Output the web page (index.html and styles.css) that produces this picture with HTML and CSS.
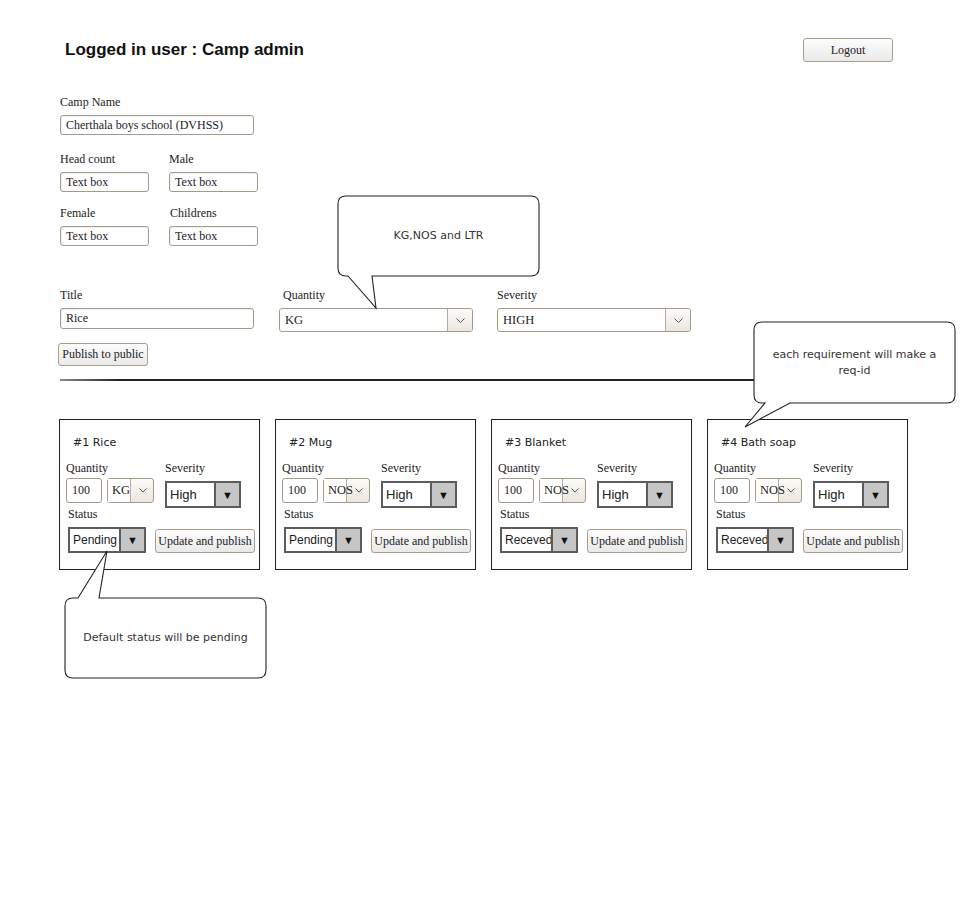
FILE: index.html
```html
<!DOCTYPE html>
<html lang="en">
<head>
    <meta charset="UTF-8">
    <meta name="viewport" content="width=device-width, initial-scale=1.0">
    <title>Camp admin</title>
    <link rel="stylesheet" href="styles.css">
</head>
<body>
    <div class="page">
        <div class="header">
            <h1>Logged in user : Camp admin</h1>
            <button class="btn logout">Logout</button>
        </div>

        <div class="form">
            <div class="field wide">
                <label>Camp Name</label>
                <div class="tb">Cherthala boys school (DVHSS)</div>
            </div>
            <div class="row row-two">
                <div class="field small">
                    <label>Head count</label>
                    <div class="tb">Text box</div>
                </div>
                <div class="field small">
                    <label>Male</label>
                    <div class="tb">Text box</div>
                </div>
            </div>
            <div class="row row-three">
                <div class="field small">
                    <label>Female</label>
                    <div class="tb">Text box</div>
                </div>
                <div class="field small">
                    <label class="nudge">Childrens</label>
                    <div class="tb">Text box</div>
                </div>
            </div>
            <div class="row row-title">
                <div class="field wide">
                    <label>Title</label>
                    <div class="tb tb-title">Rice</div>
                </div>
                <div class="field wide">
                    <label class="indent">Quantity</label>
                    <div class="select">
                        <span class="select-val">KG</span>
                        <span class="select-btn"><svg width="9" height="5" viewBox="0 0 9 5"><polyline points="0.5,0.5 4.5,4.5 8.5,0.5" fill="none" stroke="#555" stroke-width="1"/></svg></span>
                    </div>
                </div>
                <div class="field wide">
                    <label>Severity</label>
                    <div class="select">
                        <span class="select-val">HIGH</span>
                        <span class="select-btn"><svg width="9" height="5" viewBox="0 0 9 5"><polyline points="0.5,0.5 4.5,4.5 8.5,0.5" fill="none" stroke="#555" stroke-width="1"/></svg></span>
                    </div>
                </div>
            </div>
            <button class="btn publish">Publish to public</button>
        </div>

        <div class="divider"></div>

        <div class="cards">
            <div class="card">
                <div class="card-title">#1 Rice</div>
                <div class="card-row">
                    <div class="cell cell-qty">
                        <div class="clabel">Quantity</div>
                        <div class="qty">
                            <div class="num">100</div>
                            <div class="unit"><span class="unit-val">KG</span><span class="unit-btn"><svg width="8" height="5" viewBox="0 0 8 5"><polyline points="0.5,0.5 4,4.2 7.5,0.5" fill="none" stroke="#555" stroke-width="1"/></svg></span></div>
                        </div>
                    </div>
                    <div class="cell">
                        <div class="clabel">Severity</div>
                        <div class="dd dd-sev"><span class="dd-val">High</span><span class="dd-arr">&#9660;</span></div>
                    </div>
                </div>
                <div class="card-row status-row">
                    <div class="cell cell-status">
                        <div class="clabel">Status</div>
                        <div class="dd dd-status"><span class="dd-val">Pending</span><span class="dd-arr">&#9660;</span></div>
                    </div>
                    <button class="btn update">Update and publish</button>
                </div>
            </div>

            <div class="card">
                <div class="card-title">#2 Mug</div>
                <div class="card-row">
                    <div class="cell cell-qty">
                        <div class="clabel">Quantity</div>
                        <div class="qty">
                            <div class="num">100</div>
                            <div class="unit"><span class="unit-val">NOS</span><span class="unit-btn"><svg width="8" height="5" viewBox="0 0 8 5"><polyline points="0.5,0.5 4,4.2 7.5,0.5" fill="none" stroke="#555" stroke-width="1"/></svg></span></div>
                        </div>
                    </div>
                    <div class="cell">
                        <div class="clabel">Severity</div>
                        <div class="dd dd-sev"><span class="dd-val">High</span><span class="dd-arr">&#9660;</span></div>
                    </div>
                </div>
                <div class="card-row status-row">
                    <div class="cell cell-status">
                        <div class="clabel">Status</div>
                        <div class="dd dd-status"><span class="dd-val">Pending</span><span class="dd-arr">&#9660;</span></div>
                    </div>
                    <button class="btn update">Update and publish</button>
                </div>
            </div>

            <div class="card">
                <div class="card-title">#3 Blanket</div>
                <div class="card-row">
                    <div class="cell cell-qty">
                        <div class="clabel">Quantity</div>
                        <div class="qty">
                            <div class="num">100</div>
                            <div class="unit"><span class="unit-val">NOS</span><span class="unit-btn"><svg width="8" height="5" viewBox="0 0 8 5"><polyline points="0.5,0.5 4,4.2 7.5,0.5" fill="none" stroke="#555" stroke-width="1"/></svg></span></div>
                        </div>
                    </div>
                    <div class="cell">
                        <div class="clabel">Severity</div>
                        <div class="dd dd-sev"><span class="dd-val">High</span><span class="dd-arr">&#9660;</span></div>
                    </div>
                </div>
                <div class="card-row status-row">
                    <div class="cell cell-status">
                        <div class="clabel">Status</div>
                        <div class="dd dd-status"><span class="dd-val">Receved</span><span class="dd-arr">&#9660;</span></div>
                    </div>
                    <button class="btn update">Update and publish</button>
                </div>
            </div>

            <div class="card">
                <div class="card-title">#4 Bath soap</div>
                <div class="card-row">
                    <div class="cell cell-qty">
                        <div class="clabel">Quantity</div>
                        <div class="qty">
                            <div class="num">100</div>
                            <div class="unit"><span class="unit-val">NOS</span><span class="unit-btn"><svg width="8" height="5" viewBox="0 0 8 5"><polyline points="0.5,0.5 4,4.2 7.5,0.5" fill="none" stroke="#555" stroke-width="1"/></svg></span></div>
                        </div>
                    </div>
                    <div class="cell">
                        <div class="clabel">Severity</div>
                        <div class="dd dd-sev"><span class="dd-val">High</span><span class="dd-arr">&#9660;</span></div>
                    </div>
                </div>
                <div class="card-row status-row">
                    <div class="cell cell-status">
                        <div class="clabel">Status</div>
                        <div class="dd dd-status"><span class="dd-val">Receved</span><span class="dd-arr">&#9660;</span></div>
                    </div>
                    <button class="btn update">Update and publish</button>
                </div>
            </div>
        </div>

        <!-- annotation bubbles -->
        <div class="callout callout-units">
            <svg class="bubble" width="204" height="116" viewBox="0 0 204 116">
                <path d="M9 1 H194 Q202 1 202 9 V73 Q202 81 194 81 H35 L39 113 L11 81 H9 Q1 81 1 73 V9 Q1 1 9 1 Z" fill="#fff" stroke="#222" stroke-width="1.1"/>
            </svg>
            <div class="callout-text">KG,NOS and LTR</div>
        </div>

        <div class="callout callout-reqid">
            <svg class="bubble" width="214" height="108" viewBox="0 0 214 108">
                <path d="M19 1 H204 Q212 1 212 9 V74 Q212 82 204 82 H47 L2 106 L22 82 H19 Q11 82 11 74 V9 Q11 1 19 1 Z" fill="#fff" stroke="#222" stroke-width="1.1"/>
            </svg>
            <div class="callout-text">each requirement will make a<br>req-id</div>
        </div>

        <div class="callout callout-status">
            <svg class="bubble" width="204" height="131" viewBox="0 0 204 131">
                <path d="M9 49 H14 L43 2 L35 49 H194 Q202 49 202 57 V121 Q202 129 194 129 H9 Q1 129 1 121 V57 Q1 49 9 49 Z" fill="#fff" stroke="#222" stroke-width="1.1"/>
            </svg>
            <div class="callout-text">Default status will be pending</div>
        </div>
    </div>
</body>
</html>
```

FILE: styles.css
```css
body {
    margin: 0;
    background: #fff;
    color: #222;
    font-family: 'Liberation Serif', serif;
    font-size: 12px;
}
.page {
    position: relative;
    width: 960px;
    min-height: 900px;
    box-sizing: border-box;
    padding: 38px 0 0 60px;
}
.header {
    display: flex;
    justify-content: space-between;
    align-items: center;
    width: 833px;
    height: 24px;
}
h1 {
    margin: 0 0 0 5px;
    font-family: 'Liberation Sans', sans-serif;
    font-size: 17px;
    font-weight: 700;
    color: #111;
}
.btn {
    font-family: 'Liberation Serif', serif;
    font-size: 12px;
    color: #222;
    background: linear-gradient(#fdfdfd, #e9e9e9);
    border: 1px solid #a89e8c;
    border-radius: 3px;
    padding: 0;
    cursor: pointer;
}
.logout {
    width: 90px;
    height: 24px;
}

/* form */
.form {
    margin-top: 33px;
}
.field label {
    display: block;
    line-height: 14px;
    margin-bottom: 6px;
}
.field label.indent {
    padding-left: 4px;
}
.field label.nudge {
    padding-left: 1px;
}
.wide {
    width: 194px;
}
.small {
    width: 89px;
}
.row {
    display: flex;
    gap: 20px;
}
.row-two {
    margin-top: 17px;
}
.row-three {
    margin-top: 14px;
}
.row-title {
    margin-top: 42px;
    gap: 25px;
}
.row-title .field:last-child {
    margin-left: -1px;
}
.tb {
    height: 20px;
    box-sizing: border-box;
    border: 1px solid #a39a8a;
    border-radius: 3px;
    padding: 0 5px;
    font-size: 12px;
    line-height: 18px;
    white-space: nowrap;
    box-shadow: inset 1px 1px 1px rgba(0, 0, 0, 0.06);
}
.tb-title {
    height: 21px;
    line-height: 19px;
}
.select {
    display: flex;
    height: 24px;
    box-sizing: border-box;
    border: 1px solid #a39a8a;
    border-radius: 3px;
    background: #fff;
    margin-top: 1px;
}
.select-val {
    flex: 1;
    padding-left: 5px;
    font-size: 12.5px;
    line-height: 22px;
}
.select-btn {
    width: 24px;
    border-left: 1px solid #b3aa9a;
    background: linear-gradient(#fcfbf9, #ebe7df);
    display: flex;
    align-items: center;
    justify-content: center;
    border-radius: 0 3px 3px 0;
}
.publish {
    display: block;
    margin: 11px 0 0 -2px;
    width: 90px;
    height: 23px;
}

.divider {
    margin-top: 13px;
    width: 840px;
    height: 2px;
    background: linear-gradient(to right, #8a8a8a, #222 60px);
}

/* requirement cards */
.cards {
    display: flex;
    gap: 15px;
    margin: 38px 0 0 -1px;
}
.card {
    width: 201px;
    height: 151px;
    box-sizing: border-box;
    border: 1px solid #222;
    padding: 16px 4px 0 6px;
}
.card-title {
    margin-left: 7px;
    font-family: 'DejaVu Sans', sans-serif;
    font-size: 11px;
    line-height: 14px;
    color: #222;
    margin-bottom: 11px;
}
.card-row {
    display: flex;
}
.cell-qty {
    width: 99px;
}
.clabel {
    line-height: 14px;
}
.qty {
    display: flex;
    gap: 5px;
    margin-top: 3px;
}
.num {
    width: 36px;
    height: 25px;
    box-sizing: border-box;
    border: 1px solid #a39a8a;
    border-radius: 3px;
    padding-left: 5px;
    line-height: 23px;
}
.unit {
    display: flex;
    width: 47px;
    height: 25px;
    box-sizing: border-box;
    border: 1px solid #a39a8a;
    border-radius: 3px;
    background: linear-gradient(#fcfbf9, #ebe7df);
}
.unit-val {
    position: relative;
    z-index: 1;
    width: 22px;
    padding-left: 4px;
    box-sizing: border-box;
    background: #fff;
    font-size: 12.5px;
    line-height: 23px;
    white-space: nowrap;
    overflow: visible;
}
.unit-btn {
    flex: 1;
    border-left: 1px solid #b3aa9a;
    display: flex;
    align-items: center;
    justify-content: center;
    padding-left: 2px;
}
.dd {
    display: flex;
    box-sizing: border-box;
    border: 2px solid #5c5c5c;
    background: #fff;
}
.dd-val {
    flex: 1;
    overflow: hidden;
    white-space: nowrap;
    padding-left: 3px;
    font-family: 'Liberation Sans', sans-serif;
    font-size: 13px;
}
.dd-arr {
    width: 23px;
    border-left: 2px solid #5c5c5c;
    background: #c6c6c6;
    display: flex;
    align-items: center;
    justify-content: center;
    font-size: 11px;
    color: #111;
}
.dd-sev {
    width: 76px;
    height: 27px;
    margin-top: 6px;
}
.dd-sev .dd-val {
    line-height: 23px;
}
.dd-status {
    width: 78px;
    height: 26px;
    margin-top: 6px;
}
.dd-status .dd-val {
    font-size: 12px;
    line-height: 22px;
}
.status-row {
    margin-top: -1px;
    align-items: flex-end;
}
.cell-status {
    margin-left: 2px;
}
.update {
    width: 100px;
    height: 24px;
    margin-left: 9px;
}

/* annotations */
.callout {
    position: absolute;
}
.bubble {
    position: absolute;
    left: 0;
    top: 0;
}
.callout-text {
    position: absolute;
    display: flex;
    align-items: center;
    justify-content: center;
    text-align: center;
    font-family: 'DejaVu Sans', sans-serif;
    font-size: 11px;
    line-height: 16px;
    color: #333;
}
.callout-units {
    left: 337px;
    top: 195px;
    width: 204px;
    height: 116px;
}
.callout-units .callout-text {
    left: 1px;
    top: 1px;
    width: 201px;
    height: 80px;
}
.callout-reqid {
    left: 743px;
    top: 321px;
    width: 214px;
    height: 108px;
}
.callout-reqid .callout-text {
    left: 11px;
    top: 1px;
    width: 201px;
    height: 81px;
}
.callout-status {
    left: 64px;
    top: 549px;
    width: 204px;
    height: 131px;
}
.callout-status .callout-text {
    left: 1px;
    top: 49px;
    width: 201px;
    height: 80px;
}
```
